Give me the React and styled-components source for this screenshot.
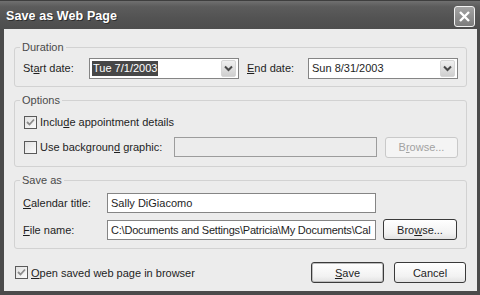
import styled, { createGlobalStyle } from 'styled-components';

const Global = createGlobalStyle`
    html, body {
        margin: 0;
        padding: 0;
        background: #3a3a3a;
    }
    * {
        box-sizing: border-box;
    }
`;

function Chevron() {
    return (
        <svg width="9" height="7" viewBox="0 0 9 7">
            <path d="M1 1.5 L4.5 5 L8 1.5" fill="none" stroke="#4a4a4a" strokeWidth="2" />
        </svg>
    );
}

function Check() {
    return (
        <svg width="9" height="9" viewBox="0 0 9 9">
            <path d="M1 4 L3.5 6.5 L8 1.5" fill="none" stroke="#8c8c8c" strokeWidth="1.8" />
        </svg>
    );
}

function Combo({ value, selected }) {
    return (
        <ComboBox>
            <ComboText $selected={selected}>{value}</ComboText>
            <DropButton>
                <Chevron />
            </DropButton>
        </ComboBox>
    );
}

function CheckItem({ checked, children }) {
    return (
        <CheckLabel>
            <Box>{checked && <Check />}</Box>
            <span>{children}</span>
        </CheckLabel>
    );
}

function App() {
    return (
        <>
            <Global />
            <Window>
                <TitleBar>
                    <Title>Save as Web Page</Title>
                    <CloseButton>
                        <svg width="13" height="13" viewBox="0 0 13 13">
                            <path d="M2 2 L11 11 M11 2 L2 11" stroke="#fff" strokeWidth="2.4" />
                        </svg>
                    </CloseButton>
                </TitleBar>
                <Frame>
                    <Body>
                        <Group>
                            <Legend>Duration</Legend>
                            <Row $h={20} $top={3}>
                                <Label $w={66}>St<U>a</U>rt date:</Label>
                                <Combo value="Tue 7/1/2003" selected />
                                <Label $w={61} $gap={8}><U>E</U>nd date:</Label>
                                <Combo value="Sun 8/31/2003" />
                            </Row>
                        </Group>

                        <Group>
                            <Legend>Options</Legend>
                            <Row $h={28}>
                                <CheckItem checked>Inclu<U>d</U>e appointment details</CheckItem>
                            </Row>
                            <Row $h={22}>
                                <CheckItem>Use backgroun<U>d</U> graphic:</CheckItem>
                                <TextBox $w={203} $push $disabled />
                                <Button $w={73} $gap={8} $disabled>B<U>r</U>owse...</Button>
                            </Row>
                        </Group>

                        <Group>
                            <Legend>Save as</Legend>
                            <Row $h={20} $top={5}>
                                <Label $w={84}><U>C</U>alendar title:</Label>
                                <TextBox $w={269}>Sally DiGiacomo</TextBox>
                            </Row>
                            <Row $h={21} $top={6}>
                                <Label $w={84}><U>F</U>ile name:</Label>
                                <TextBox $w={269} $tight>C:\Documents and Settings\Patricia\My Documents\Cal</TextBox>
                                <Button $w={74} $gap={7}>Bro<U>w</U>se...</Button>
                            </Row>
                        </Group>

                        <Footer>
                            <CheckItem checked><U>O</U>pen saved web page in browser</CheckItem>
                            <Buttons>
                                <Button $w={73} $default><U>S</U>ave</Button>
                                <Button $w={72}>Cancel</Button>
                            </Buttons>
                        </Footer>
                    </Body>
                </Frame>
            </Window>
        </>
    );
}

export default App;

const Window = styled.div`
    width: 480px;
    height: 295px;
    display: flex;
    flex-direction: column;
    background: #4e4e4e;
    font-family: "Liberation Sans", Arial, sans-serif;
    font-size: 11px;
    color: #1e1e1e;
`

const TitleBar = styled.div`
    height: 29px;
    flex: none;
    display: flex;
    align-items: center;
    justify-content: space-between;
    padding: 0 5px 0 6px;
    background: linear-gradient(#707070 0%, #5c5c5c 20%, #535353 60%, #4d4d4d 100%);
    border-top: 1px solid #3e3e3e;
`

const Title = styled.div`
    color: #fff;
    font-weight: bold;
    font-size: 12.5px;
    letter-spacing: 0.1px;
    text-shadow: 1px 1px 0 #2e2e2e;
    margin-top: 1px;
`

const CloseButton = styled.div`
    width: 21px;
    height: 21px;
    margin-top: 2px;
    display: flex;
    align-items: center;
    justify-content: center;
    border: 1px solid #f2f2f2;
    border-radius: 3px;
    background: linear-gradient(#a4a4a4, #7c7c7c);
`

const Frame = styled.div`
    flex: 1;
    display: flex;
    padding: 0 4px 4px;
    background: #4b4b4b;
`

const Body = styled.div`
    flex: 1;
    display: flex;
    flex-direction: column;
    gap: 7px;
    padding: 12px 10px 0;
    background: #ececec;
`

const Group = styled.fieldset`
    margin: 0;
    padding: 1px 8px 8px;
    border: 1px solid #d2d2d2;
    border-radius: 3px;
`

const Legend = styled.legend`
    padding: 0 2px;
    margin-left: -3px;
    line-height: 13px;
    color: #4a4a4a;
`

const Row = styled.div`
    display: flex;
    align-items: center;
    height: ${p => p.$h}px;
    margin-top: ${p => p.$top || 0}px;
`

const Label = styled.span`
    width: ${p => p.$w}px;
    margin-left: ${p => p.$gap || 0}px;
    flex: none;
    white-space: nowrap;
`

const U = styled.span`
    text-decoration: underline;
`

const ComboBox = styled.div`
    width: 150px;
    height: 21px;
    flex: none;
    display: flex;
    align-items: center;
    justify-content: space-between;
    padding: 0 2px;
    background: #fff;
    border: 1px solid #858585;
`

const ComboText = styled.span`
    padding: 1px 1px 2px;
    color: ${p => (p.$selected ? '#fff' : '#1e1e1e')};
    background: ${p => (p.$selected ? '#474747' : 'transparent')};
`

const DropButton = styled.div`
    width: 15px;
    height: 17px;
    display: flex;
    align-items: center;
    justify-content: center;
    border: 1px solid #d6d6d6;
    border-radius: 2px;
    background: linear-gradient(#f0f0f0, #cfcfcf);
`

const CheckLabel = styled.label`
    display: flex;
    align-items: center;
    gap: 3px;
    margin-left: 1px;
    white-space: nowrap;
`

const Box = styled.span`
    width: 13px;
    height: 13px;
    display: flex;
    align-items: center;
    justify-content: center;
    border: 1px solid #5a5a5a;
    background: linear-gradient(135deg, #e2e2e2, #fbfbfb);
`

const TextBox = styled.div`
    width: ${p => p.$w}px;
    height: 20px;
    flex: none;
    margin-left: ${p => (p.$push ? 'auto' : '0')};
    padding: 0 2px 0 3px;
    display: flex;
    align-items: center;
    overflow: hidden;
    white-space: nowrap;
    letter-spacing: ${p => (p.$tight ? '-0.2px' : 'normal')};
    background: ${p => (p.$disabled ? '#ececec' : '#fff')};
    border: 1px solid ${p => (p.$disabled ? '#9c9c9c' : '#858585')};
`

const Button = styled.div`
    width: ${p => p.$w}px;
    height: 21px;
    flex: none;
    margin-left: ${p => p.$gap || 0}px;
    display: flex;
    align-items: center;
    justify-content: center;
    border-radius: 3px;
    border: 1px solid ${p => (p.$disabled ? '#c9c9c9' : '#3a3a3a')};
    color: ${p => (p.$disabled ? '#a2a2a2' : '#1e1e1e')};
    background: ${p => (p.$disabled ? '#f4f4f4' : 'linear-gradient(#ffffff, #f2f2f2 70%, #e2e2e2)')};
    box-shadow: ${p => (p.$default ? 'inset 0 0 0 1px #bdbdbd' : 'none')};
`

const Footer = styled.div`
    display: flex;
    align-items: center;
    justify-content: space-between;
    margin-top: 6px;
    padding-right: 1px;
`

const Buttons = styled.div`
    display: flex;
    gap: 10px;
`
